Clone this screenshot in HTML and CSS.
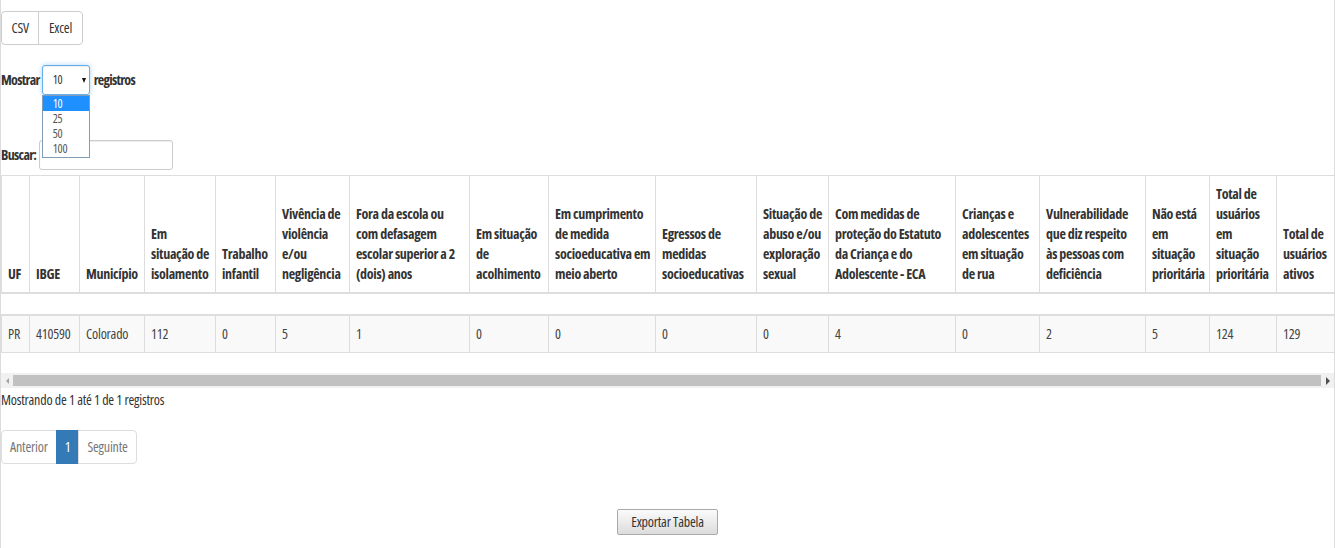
FILE: index.html
```html
<!DOCTYPE html>
<html lang="pt-BR">
<head>
<meta charset="utf-8">
<title>Tabela</title>
<link rel="stylesheet" href="styles.css">
</head>
<body>
<div class="page">
  <div class="dt-buttons">
    <button class="btn first">CSV</button><button class="btn last">Excel</button>
  </div>

  <div class="length">
    <span class="lbl">Mostrar</span>
    <span class="sel-wrap">
      <span class="select"><span class="sel-val">10</span><span class="sel-arrow"></span></span>
      <span class="dropdown">
        <span class="opt active">10</span>
        <span class="opt">25</span>
        <span class="opt">50</span>
        <span class="opt">100</span>
      </span>
    </span>
    <span class="lbl">registros</span>
  </div>

  <div class="filter">
    <span class="lbl">Buscar:</span><input class="search" type="text">
  </div>

  <div class="scroll">
    <table class="head-table">
      <colgroup>
        <col style="width:28px"><col style="width:50px"><col style="width:65px"><col style="width:71px">
        <col style="width:60px"><col style="width:74px"><col style="width:120px"><col style="width:79px">
        <col style="width:107px"><col style="width:101px"><col style="width:72px"><col style="width:127px">
        <col style="width:84px"><col style="width:106px"><col style="width:64px"><col style="width:67px">
        <col style="width:58px">
      </colgroup>
      <thead>
        <tr>
          <th>UF</th>
          <th>IBGE</th>
          <th>Município</th>
          <th>Em situação&nbsp;de isolamento</th>
          <th>Trabalho infantil</th>
          <th>Vivência de violência e&#8288;/&#8288;ou negligência</th>
          <th>Fora da escola ou com defasagem escolar superior a 2 (dois) anos</th>
          <th>Em situação de acolhimento</th>
          <th>Em cumprimento de medida socioeducativa&nbsp;em meio aberto</th>
          <th>Egressos de medidas socioeducativas</th>
          <th>Situação&nbsp;de abuso e&#8288;/&#8288;ou exploração sexual</th>
          <th>Com medidas de proteção do Estatuto da Criança e do Adolescente - ECA</th>
          <th>Crianças e adolescentes em situação de rua</th>
          <th>Vulnerabilidade que diz respeito às&nbsp;pessoas com deficiência</th>
          <th>Não está em situação prioritária</th>
          <th>Total de usuários em situação prioritária</th>
          <th>Total de usuários ativos</th>
        </tr>
      </thead>
    </table>
    <table class="body-table">
      <colgroup>
        <col style="width:28px"><col style="width:50px"><col style="width:65px"><col style="width:71px">
        <col style="width:60px"><col style="width:74px"><col style="width:120px"><col style="width:79px">
        <col style="width:107px"><col style="width:101px"><col style="width:72px"><col style="width:127px">
        <col style="width:84px"><col style="width:106px"><col style="width:64px"><col style="width:67px">
        <col style="width:58px">
      </colgroup>
      <tbody>
        <tr>
          <td>PR</td><td>410590</td><td>Colorado</td><td>112</td><td>0</td><td>5</td><td>1</td><td>0</td>
          <td>0</td><td>0</td><td>0</td><td>4</td><td>0</td><td>2</td><td>5</td><td>124</td><td>129</td>
        </tr>
      </tbody>
    </table>
  </div>

  <div class="scrollbar">
    <span class="sb-btn left"><span class="tri-left"></span></span>
    <span class="sb-thumb"></span>
    <span class="sb-btn right"><span class="tri-right"></span></span>
  </div>

  <div class="info">Mostrando de 1 até 1 de 1 registros</div>

  <ul class="pagination">
    <li class="disabled"><a>Anterior</a></li>
    <li class="active"><a>1</a></li>
    <li class="disabled"><a>Seguinte</a></li>
  </ul>

  <div class="export">
    <button class="export-btn">Exportar Tabela</button>
  </div>
</div>
</body>
</html>
```

FILE: styles.css
```css
html, body {
  margin: 0;
  padding: 0;
  background: #fff;
}

body {
  font-family: "Open Sans", "Liberation Sans", Arial, sans-serif;
  font-stretch: 75%;
  font-size: 14px;
  line-height: 20px;
  letter-spacing: -0.2px;
  color: #333;
}

.page {
  width: 1335px;
  height: 548px;
  box-sizing: border-box;
  border-left: 1px solid #dcdcdc;
  border-right: 1px solid #dcdcdc;
  overflow: hidden;
}

/* export buttons */
.dt-buttons {
  display: flex;
  padding-top: 11px;
}

.btn {
  font: inherit;
  letter-spacing: inherit;
  color: #333;
  background: #fff;
  border: 1px solid #ccc;
  padding: 6px 9.5px;
  margin: 0;
}

.btn + .btn {
  margin-left: -1px;
}

.btn.first {
  border-radius: 4px 0 0 4px;
}

.btn.last {
  border-radius: 0 4px 4px 0;
}

/* length menu */
.length {
  margin-top: 20px;
  height: 30px;
  display: flex;
  align-items: center;
  font-weight: bold;
}

.lbl {
  letter-spacing: -0.7px;
}

.sel-wrap {
  position: relative;
  margin: 0 4px 0 2px;
  height: 30px;
}

.select {
  width: 48px;
  height: 30px;
  box-sizing: border-box;
  display: flex;
  align-items: center;
  padding-left: 10px;
  border: 1px solid #66afe9;
  border-radius: 3px;
  box-shadow: inset 0 1px 1px rgba(0,0,0,.075), 0 0 5px rgba(102,175,233,.55);
  background: #fff;
  font-size: 12px;
  font-weight: normal;
  color: #333;
}

.sel-arrow {
  margin-left: auto;
  margin-right: 3px;
  width: 0;
  height: 0;
  border-left: 2.5px solid transparent;
  border-right: 2.5px solid transparent;
  border-top: 5px solid #111;
}

.dropdown {
  position: absolute;
  top: 100%;
  left: 0;
  width: 48px;
  box-sizing: border-box;
  border: 1px solid #7f9db9;
  background: #fff;
  padding-bottom: 1px;
  display: flex;
  flex-direction: column;
  font-size: 12px;
  font-weight: normal;
  z-index: 5;
}

.opt {
  display: block;
  height: 15px;
  line-height: 15px;
  padding-left: 10px;
  color: #555;
}

.opt.active {
  background: #1e90ff;
  color: #fff;
}

/* search */
.filter {
  margin-top: 45px;
  height: 30px;
  display: flex;
  align-items: center;
  font-weight: bold;
}

.search {
  width: 134px;
  height: 30px;
  box-sizing: border-box;
  margin: 0 0 0 3px;
  border: 1px solid #ccc;
  border-radius: 3px;
  box-shadow: inset 0 1px 1px rgba(0,0,0,.075);
  background: #fff;
}

/* table */
.scroll {
  margin-top: 5px;
  overflow: hidden;
}

table {
  border-collapse: collapse;
  table-layout: fixed;
  width: 1333px;
}

th, td {
  border: 1px solid #ddd;
  padding: 8px 3px 8px 6px;
  text-align: left;
  line-height: 20px;
}

th {
  font-weight: bold;
  letter-spacing: -0.3px;
  vertical-align: bottom;
  border-bottom-width: 2px;
}

.body-table {
  margin-top: 20px;
}

.body-table td {
  border-top-width: 2px;
  background: #f9f9f9;
  vertical-align: top;
  color: #444;
}

/* horizontal scrollbar of the table */
.scrollbar {
  margin-top: 20px;
  height: 15px;
  display: flex;
  background: #f1f1f1;
}

.sb-btn {
  width: 12px;
  display: flex;
  align-items: center;
  justify-content: center;
}

.sb-btn.right {
  width: 13px;
}

.tri-left {
  width: 0;
  height: 0;
  border-top: 3px solid transparent;
  border-bottom: 3px solid transparent;
  border-right: 3px solid #a3a3a3;
}

.tri-right {
  width: 0;
  height: 0;
  border-top: 4px solid transparent;
  border-bottom: 4px solid transparent;
  border-left: 4px solid #505050;
}

.sb-thumb {
  flex: 1;
  margin: 2px 0;
  background: #c1c1c1;
}

/* info + pagination */
.info {
  margin-top: 2px;
  line-height: 20px;
}

.pagination {
  display: flex;
  list-style: none;
  margin: 20px 0 0;
  padding: 0;
}

.pagination li a {
  display: block;
  padding: 6px 8px;
  line-height: 20px;
  border: 1px solid #ddd;
  margin-left: -1px;
  background: #fff;
  color: #777;
}

.pagination li:first-child a {
  margin-left: 0;
  border-radius: 4px 0 0 4px;
}

.pagination li:last-child a {
  border-radius: 0 4px 4px 0;
}

.pagination li.active a {
  background: #337ab7;
  border-color: #337ab7;
  color: #fff;
}

/* export table button */
.export {
  margin-top: 45px;
  display: flex;
  justify-content: center;
}

.export-btn {
  font: inherit;
  letter-spacing: inherit;
  line-height: 16px;
  padding: 4px 13px;
  color: #333;
  border: 1px solid #a9a9a9;
  border-radius: 2px;
  background: linear-gradient(#fbfbfb, #dcdcdc);
}
```
